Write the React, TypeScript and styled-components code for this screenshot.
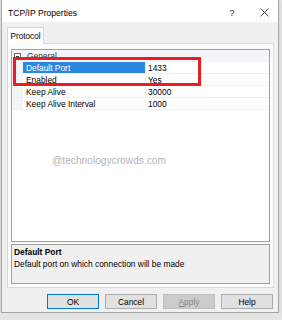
import React from "react";
import styled, { createGlobalStyle } from "styled-components";

const Global = createGlobalStyle`
  html, body { margin: 0; padding: 0; background: #e4e4e4; }
  body { font-family: "Liberation Sans", Arial, sans-serif; }
  * { box-sizing: border-box; }
`;

const Window = styled.div`
  width: 278px;
  height: 313px;
  margin-left: 1px;
  background: #f0f0f0;
  border: 1px solid #a6a6a6;
  border-top: none;
  display: flex;
  flex-direction: column;
  box-shadow: 0 2px 4px rgba(0, 0, 0, 0.12);
`;

const TitleBar = styled.div`
  height: 22px;
  background: #ffffff;
  display: flex;
  align-items: center;
  padding-left: 6px;
  padding-top: 3px;
`;

const Title = styled.div`
  flex: 1;
  font-size: 8.6px;
  color: #000;
`;

const TitleBtn = styled.div<{ $w: number; $mr?: number }>`
  width: ${(p) => p.$w}px;
  margin-right: ${(p) => p.$mr ?? 0}px;
  display: flex;
  align-items: center;
  justify-content: center;
  font-size: 9px;
  color: #222;
`;

const Body = styled.div`
  flex: 1;
  display: flex;
  flex-direction: column;
  padding: 5px 3px 0 5px;
`;

const TabStrip = styled.div`
  display: flex;
  height: 16px;
`;

const Tab = styled.div`
  width: 37px;
  height: 17px;
  background: #ffffff;
  border: 1px solid #d9d9d9;
  border-bottom: none;
  font-size: 8.2px;
  display: flex;
  align-items: center;
  justify-content: center;
  position: relative;
  z-index: 1;
  color: #000;
`;

const Panel = styled.div`
  width: 267px;
  height: 245px;
  background: #fcfcfc;
  border: 1px solid #d9d9d9;
  padding: 5px 3px 3px 3px;
  display: flex;
  flex-direction: column;
  gap: 2px;
`;

const Grid = styled.div`
  position: relative;
  height: 193px;
  background: #ffffff;
  border: 1px solid #a0a0a0;
  display: flex;
  flex-direction: column;
  overflow: hidden;
`;

const CategoryRow = styled.div`
  height: 12px;
  display: flex;
  align-items: center;
  background: #f3f5f8;
  font-size: 8.4px;
  color: #333;
`;

const Expander = styled.div`
  width: 7px;
  height: 7px;
  margin: 0 6px 0 2px;
  border: 1px solid #666;
  background: #fff;
  display: flex;
  align-items: center;
  justify-content: center;
  &::after {
    content: "";
    width: 3px;
    height: 1px;
    background: #333;
  }
`;

const Row = styled.div`
  height: 12px;
  display: flex;
  border-bottom: 1px solid #f0f0f0;
  font-size: 8.4px;
  color: #000;
`;

const Gutter = styled.div`
  width: 11px;
  background: #f3f5f8;
`;

const LabelCell = styled.div<{ $selected?: boolean }>`
  width: 123px;
  padding-left: 3px;
  display: flex;
  align-items: center;
  border-right: 1px solid #f0f0f0;
  background: ${(p) => (p.$selected ? "#2a88e0" : "transparent")};
  color: ${(p) => (p.$selected ? "#ffffff" : "#000")};
`;

const ValueCell = styled.div`
  flex: 1;
  padding-left: 2px;
  display: flex;
  align-items: center;
`;

const Highlight = styled.div`
  position: absolute;
  left: 1px;
  top: 7px;
  width: 188px;
  height: 29px;
  border: 3.5px solid #ec1c24;
  pointer-events: none;
`;

const Watermark = styled.div`
  position: absolute;
  left: 40px;
  top: 105px;
  font-size: 10.2px;
  color: #b4b4b4;
`;

const Description = styled.div`
  height: 40px;
  border: 1px solid #a0a0a0;
  background: #f0f0f0;
  padding: 2px 2px;
  display: flex;
  flex-direction: column;
  gap: 2px;
  font-size: 8.4px;
  color: #000;
`;

const DescTitle = styled.div`
  font-weight: bold;
`;

const ButtonRow = styled.div`
  display: flex;
  justify-content: flex-end;
  gap: 6px;
  margin-top: 6px;
  padding-right: 2px;
`;

const Button = styled.div<{ $default?: boolean; $disabled?: boolean }>`
  width: 52px;
  height: 15px;
  display: flex;
  align-items: center;
  justify-content: center;
  font-size: 8.4px;
  background: ${(p) => (p.$disabled ? "#cccccc" : "#e1e1e1")};
  color: ${(p) => (p.$disabled ? "#838383" : "#000")};
  border: 1px solid
    ${(p) => (p.$default ? "#0078d7" : p.$disabled ? "#bfbfbf" : "#adadad")};
  u { text-decoration: underline; }
`;

const CloseIcon = () => (
  <svg width="9" height="9" viewBox="0 0 9 9">
    <path d="M0.5 0.5 L8.5 8.5 M8.5 0.5 L0.5 8.5" stroke="#333" strokeWidth="0.9" />
  </svg>
);

const rows = [
  { label: "Default Port", value: "1433", selected: true },
  { label: "Enabled", value: "Yes" },
  { label: "Keep Alive", value: "30000" },
  { label: "Keep Alive Interval", value: "1000" },
];

export default function App() {
  return (
    <>
      <Global />
      <Window>
        <TitleBar>
          <Title>TCP/IP Properties</Title>
          <TitleBtn $w={12} $mr={12}>?</TitleBtn>
          <TitleBtn $w={28}>
            <CloseIcon />
          </TitleBtn>
        </TitleBar>
        <Body>
          <TabStrip>
            <Tab>Protocol</Tab>
          </TabStrip>
          <Panel>
            <Grid>
              <CategoryRow>
                <Expander />
                General
              </CategoryRow>
              {rows.map((r) => (
                <Row key={r.label}>
                  <Gutter />
                  <LabelCell $selected={r.selected}>{r.label}</LabelCell>
                  <ValueCell>{r.value}</ValueCell>
                </Row>
              ))}
              <Highlight />
              <Watermark>@technologycrowds.com</Watermark>
            </Grid>
            <Description>
              <DescTitle>Default Port</DescTitle>
              <div>Default port on which connection will be made</div>
            </Description>
          </Panel>
          <ButtonRow>
            <Button $default>OK</Button>
            <Button>Cancel</Button>
            <Button $disabled>
              <span>
                <u>A</u>pply
              </span>
            </Button>
            <Button>Help</Button>
          </ButtonRow>
        </Body>
      </Window>
    </>
  );
}
